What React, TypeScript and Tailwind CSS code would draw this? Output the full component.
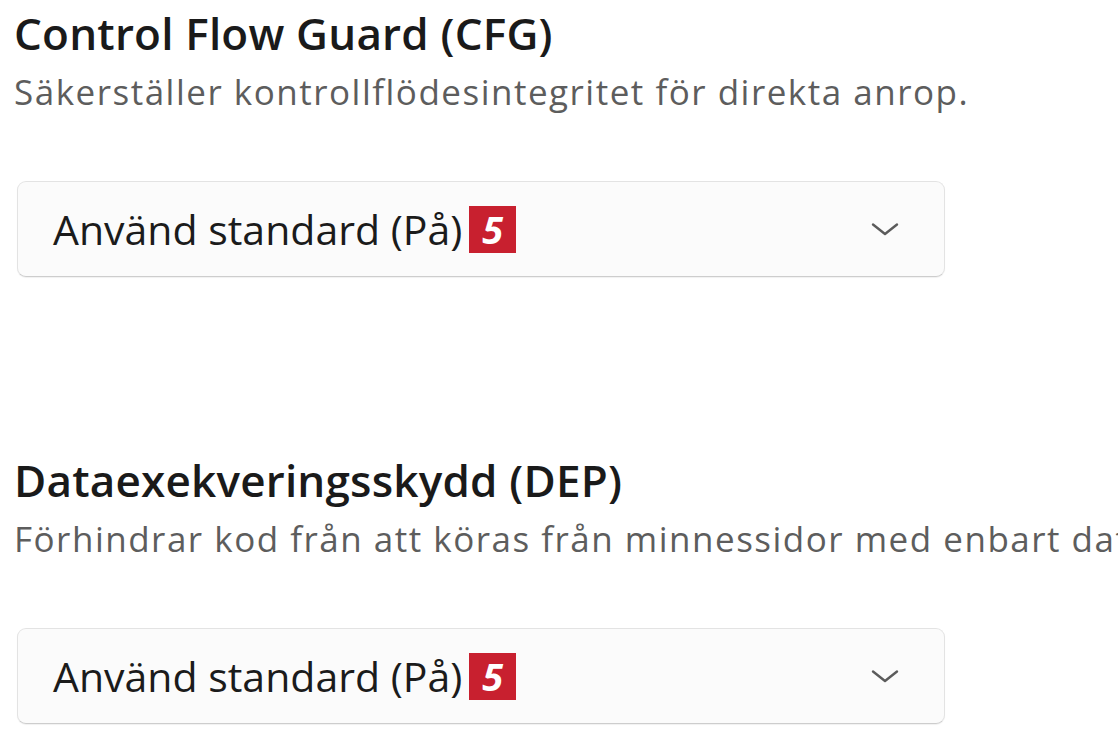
import React from "react";

const font = { fontFamily: '"Open Sans", "Noto Sans", sans-serif' };

function Chevron() {
  return (
    <svg width="28" height="15" viewBox="0 0 28 15" fill="none" className="shrink-0">
      <path d="M2 2.5 L14 12 L26 2.5" stroke="#5b5b5b" strokeWidth="2.4" strokeLinecap="round" strokeLinejoin="round" />
    </svg>
  );
}

function Dropdown() {
  return (
    <div className="ml-[3px] flex h-[96px] w-[928px] items-center rounded-[9px] border border-[#e3e3e3] border-b-[#cdcdcd] bg-[#fbfbfb] pl-[35px] pr-[45px] shadow-[0_1px_1px_rgba(0,0,0,0.06)]">
      <span className="text-[41px] leading-none text-[#1b1b1b]">Använd standard (På)</span>
      <span className="ml-[7px] flex h-[47px] w-[47px] items-center justify-center bg-[#c8202f] text-[38px] font-bold italic leading-none text-white">5</span>
      <div className="flex-1" />
      <Chevron />
    </div>
  );
}

function Section({ title, desc }: { title: string; desc: string }) {
  return (
    <div className="flex flex-col">
      <div className="whitespace-nowrap text-[44px] font-semibold leading-[52px] tracking-[0.2px] text-[#1a1a1a]">{title}</div>
      <div className="mt-[13px] whitespace-nowrap text-[35px] leading-[40px] tracking-[1.5px] text-[#5d5d5d]">{desc}</div>
      <div className="mt-[69px]">
        <Dropdown />
      </div>
    </div>
  );
}

export default function App() {
  return (
    <div className="h-[742px] w-[1118px] overflow-hidden bg-white pl-[14px] pt-[7px]" style={font}>
      <div className="flex flex-col gap-[177px]">
        <Section title="Control Flow Guard (CFG)" desc="Säkerställer kontrollflödesintegritet för direkta anrop." />
        <Section title="Dataexekveringsskydd (DEP)" desc="Förhindrar kod från att köras från minnessidor med enbart data." />
      </div>
    </div>
  );
}
